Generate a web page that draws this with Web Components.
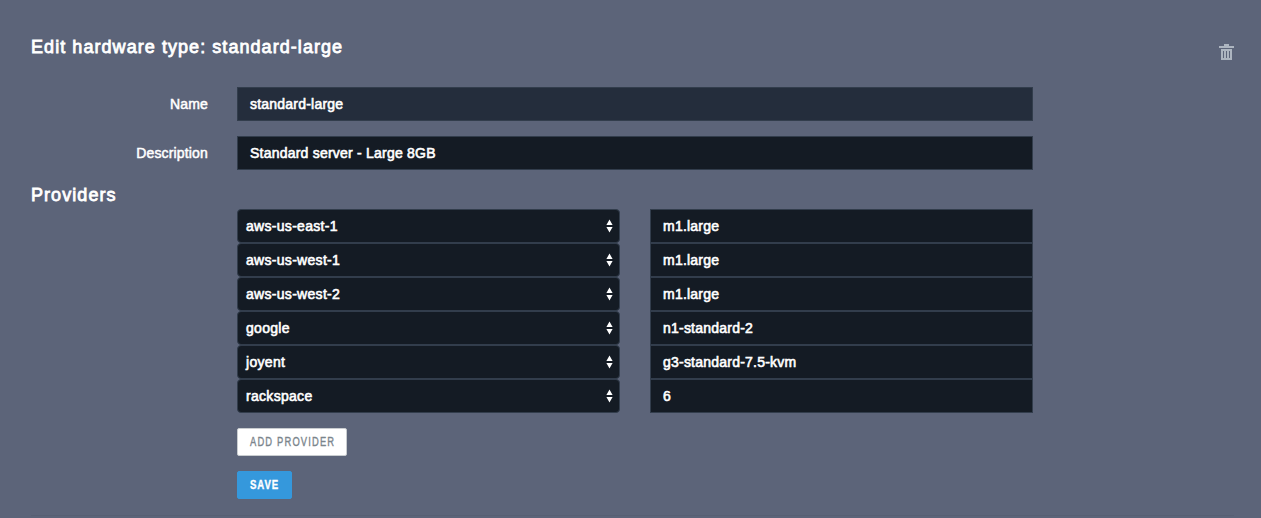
<!DOCTYPE html>
<html lang="en">
<head>
<meta charset="utf-8">
<title>Edit hardware type</title>
<style>
html,body{margin:0;background:#5c6479}
body{font-family:"Liberation Sans",Arial,sans-serif;color:#fff;overflow:hidden}
</style>
</head>
<body>
<hardware-editor></hardware-editor>
<script>
const define = (name, html, setup) => customElements.define(name, class extends HTMLElement {
  connectedCallback() {
    if (this.shadowRoot) return;
    const t = document.createElement('template');
    t.innerHTML = html;
    this.attachShadow({mode: 'open'}).append(t.content.cloneNode(true));
    if (setup) setup(this);
  }
});

define('section-title', `<style>
:host{display:block;font-size:18px;line-height:22px;letter-spacing:1.06px;-webkit-text-stroke:.8px #fff;white-space:nowrap}
</style><slot></slot>`);

define('text-field', `<style>
:host{display:flex;align-items:center;box-sizing:border-box;height:34px;padding:0 12px;border:1px solid #323d4c;background:#141b24;font-size:14px;letter-spacing:.22px;-webkit-text-stroke:.6px #fff;white-space:nowrap}
:host([readonly]){background:#242d3c}
</style><slot></slot>`);

define('select-field', `<style>
:host{display:flex;align-items:center;justify-content:space-between;box-sizing:border-box;height:34px;padding:0 6px 0 8px;border:1px solid #323d4c;border-radius:4px;background:#141b24;font-size:14px;letter-spacing:.3px;-webkit-text-stroke:.6px #fff;white-space:nowrap}
svg{display:block}
</style><slot></slot><svg width="7" height="14" viewBox="0 0 7 14" fill="#fff"><path d="M3.5 .5 6.6 6H.4zM.4 8h6.2L3.5 13.5z"/></svg>`);

define('form-row', `<style>
:host{display:grid;grid-template-columns:177px 796px;column-gap:29px;align-items:center;margin-bottom:15px}
label{font-size:14px;text-align:right;-webkit-text-stroke:.5px #fff;letter-spacing:.16px}
</style><label></label><slot></slot>`, el => {
  el.shadowRoot.querySelector('label').textContent = el.getAttribute('label');
});

define('provider-row', `<style>
:host{display:grid;grid-template-columns:383px 383px;column-gap:30px}
</style><slot></slot>`);

define('push-button', `<style>
:host{display:block}
button{display:flex;align-items:center;box-sizing:border-box;width:110px;height:28px;padding:0 0 0 12px;border:1px solid #c9cdd0;border-radius:2px;background:#fff;color:#7b858c;font:12px "Liberation Sans",Arial,sans-serif;letter-spacing:1.5px;-webkit-text-stroke:.35px}
span{display:block;white-space:nowrap;transform:scaleX(.78);transform-origin:0 50%}
:host([primary]) button{width:55px;border-color:#3598dc;background:#3598dc;color:#fff;font-weight:bold;letter-spacing:1.1px}
:host([primary]) span{transform:scaleX(.8)}
</style><button><span><slot></slot></span></button>`);

define('trash-icon', `<style>:host{display:block}svg{display:block}</style>
<svg width="15" height="16" viewBox="0 0 15 16" fill="#adb5c0"><path d="M5 0h5v2h5v2H0V2h5z"/><path fill-rule="evenodd" d="M2 5h11v11H2zM4 7v7h1V7zm3 0v7h1V7zm3 0v7h1V7z"/></svg>`);

define('hardware-editor', `<style>
:host{display:block;box-sizing:border-box;height:518px;padding:36px 27px 0 31px}
header{display:flex;justify-content:space-between;height:51px}
trash-icon{margin-top:8px}
.providers{display:block;margin-top:-1px}
.rows,.actions{margin-left:206px}
.rows{margin-top:3px}
.actions{display:grid;gap:15px;padding-top:15px}
footer{margin-top:16px;border-top:1px solid #575f73}
</style>
<header><section-title>Edit hardware type: standard-large</section-title><trash-icon></trash-icon></header>
<form-row label="Name"><text-field readonly>standard-large</text-field></form-row>
<form-row label="Description"><text-field>Standard server - Large 8GB</text-field></form-row>
<section-title class="providers">Providers</section-title>
<div class="rows">
<provider-row><select-field>aws-us-east-1</select-field><text-field>m1.large</text-field></provider-row>
<provider-row><select-field>aws-us-west-1</select-field><text-field>m1.large</text-field></provider-row>
<provider-row><select-field>aws-us-west-2</select-field><text-field>m1.large</text-field></provider-row>
<provider-row><select-field>google</select-field><text-field>n1-standard-2</text-field></provider-row>
<provider-row><select-field>joyent</select-field><text-field>g3-standard-7.5-kvm</text-field></provider-row>
<provider-row><select-field>rackspace</select-field><text-field>6</text-field></provider-row>
</div>
<div class="actions"><push-button>ADD PROVIDER</push-button><push-button primary>SAVE</push-button></div>
<footer></footer>`);
</script>
</body>
</html>
